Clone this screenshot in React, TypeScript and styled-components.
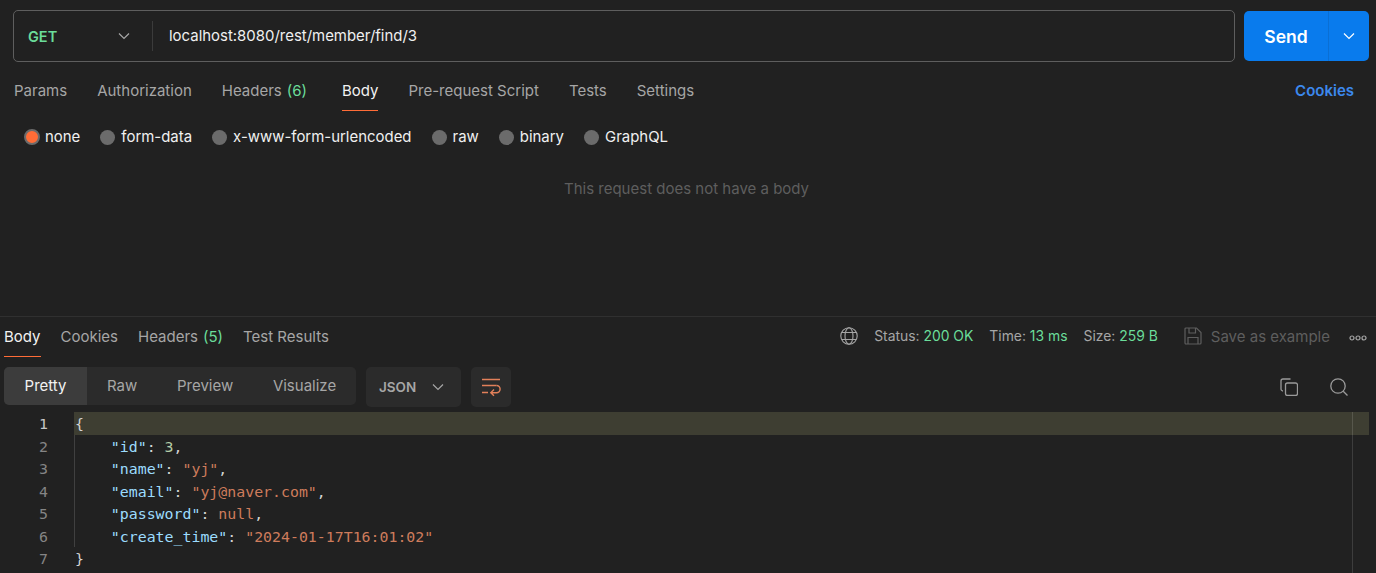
import React from "react";
import styled, { createGlobalStyle } from "styled-components";

const Global = createGlobalStyle`
  html, body { margin: 0; padding: 0; background: #212121; height: 100%; overflow: hidden; }
  body { font-family: Inter, "Noto Sans", sans-serif; color: #fff; }
`;

const Page = styled.div`
  width: 1376px;
  height: 573px;
  display: flex;
  flex-direction: column;
  overflow: hidden;
  background: #212121;
`;

const RequestPane = styled.section`
  height: 317px;
  box-sizing: border-box;
  padding: 10px 7px 0 13px;
  border-bottom: 1px solid #303030;
  display: flex;
  flex-direction: column;
`;

const UrlRow = styled.div`
  display: flex;
  gap: 9px;
  height: 52px;
`;

const UrlBox = styled.div`
  flex: 1;
  box-sizing: border-box;
  border: 1px solid #5e5e5e;
  border-radius: 5px;
  display: flex;
  align-items: center;
`;

const MethodSelect = styled.div`
  width: 139px;
  height: 30px;
  box-sizing: border-box;
  padding: 0 21px 0 14px;
  border-right: 1px solid #3b3b3b;
  display: flex;
  align-items: center;
  justify-content: space-between;
  color: #6bdd9a;
  font-size: 14.5px;
  font-weight: 600;
`;

const UrlText = styled.span`
  margin-left: 16px;
  margin-top: -1px;
  font-size: 14.95px;
  color: #f0f0f0;
`;

const SendGroup = styled.div`
  width: 125px;
  height: 50px;
  margin-top: 1px;
  background: #097bed;
  border-radius: 5px;
  display: flex;
`;

const SendLabel = styled.div`
  width: 85px;
  display: flex;
  align-items: center;
  justify-content: center;
  font-size: 17.5px;
  font-weight: 600;
  color: #fff;
  border-right: 1px solid #0a6fd4;
  box-sizing: border-box;
`;

const SendCaret = styled.div`
  flex: 1;
  display: flex;
  align-items: center;
  justify-content: center;
`;

const TabRow = styled.div`
  display: flex;
  gap: 30px;
  margin-top: 8px;
  padding-left: 1px;
  height: 41px;
  align-items: stretch;
`;

const Tab = styled.div<{ $active?: boolean; $extra?: number }>`
  display: flex;
  align-items: center;
  font-size: 15px;
  padding-right: ${(p) => p.$extra ?? 0}px;
  color: ${(p) => (p.$active ? "#f2f2f2" : "#a6a6a6")};
  ${(p) => (p.$active ? "box-shadow: inset 0 -1px 0 #ff6c37;" : "")}
`;

const ResponseTab = styled(Tab)`
  padding-bottom: 2px;
`;

const Count = styled.span`
  color: #6bdd9a;
  margin-left: 5px;
`;

const CookiesLink = styled.div`
  margin-left: auto;
  margin-right: 15px;
  display: flex;
  align-items: center;
  font-size: 15px;
  font-weight: 600;
  color: #3c89ee;
`;

const RadioRow = styled.div`
  display: flex;
  gap: 20px;
  margin: 8px 0 0 11px;
  height: 36px;
  align-items: center;
`;

const RadioItem = styled.label`
  display: flex;
  align-items: center;
  gap: 6px;
  font-size: 14.95px;
  color: #f0f0f0;
`;

const RadioDot = styled.span<{ $on?: boolean }>`
  width: ${(p) => (p.$on ? 16 : 15)}px;
  height: ${(p) => (p.$on ? 16 : 15)}px;
  margin-right: ${(p) => (p.$on ? -1 : 0)}px;
  border-radius: 50%;
  background: ${(p) => (p.$on ? "#ff6c37" : "#6b6b6b")};
  box-sizing: border-box;
  ${(p) => (p.$on ? "border: 2.5px solid #6b6b6b;" : "")}
`;

const EmptyNote = styled.div`
  margin-top: 24px;
  text-align: center;
  font-size: 15px;
  color: #5e5e5e;
  padding-right: 9px;
`;

const ResponsePane = styled.section`
  flex: 1;
  display: flex;
  flex-direction: column;
  min-height: 0;
`;

const ResponseHead = styled.div`
  display: flex;
  height: 40px;
  padding: 0 9px 0 4px;
  align-items: stretch;
`;

const ResponseTabs = styled.div`
  display: flex;
  gap: 20px;
`;

const Meta = styled.div`
  margin-left: auto;
  display: flex;
  align-items: center;
  padding-bottom: 2px;
  font-size: 13.9px;
  color: #a6a6a6;
`;

const MetaItem = styled.span`
  margin-left: 16px;
  white-space: nowrap;
`;

const MetaValue = styled.span`
  color: #6bdd9a;
`;

const SaveExample = styled.span`
  margin-left: 26px;
  margin-right: 19px;
  display: flex;
  align-items: center;
  gap: 9px;
  font-size: 15px;
  color: #5e5e5e;
`;

const DotsSlot = styled.span`
  display: flex;
  margin-top: 3px;
`;

const Toolbar = styled.div`
  display: flex;
  align-items: flex-start;
  height: 55px;
  padding: 10px 28px 0 4px;
  box-sizing: border-box;
`;

const Segment = styled.div`
  display: flex;
  height: 38px;
  width: 352px;
  background: #2b2b2b;
  border-radius: 5px;
  overflow: hidden;
`;

const SegmentItem = styled.div<{ $active?: boolean }>`
  padding: 0 20px 2px;
  min-width: ${(p) => (p.$active ? "83px" : "0")};
  box-sizing: border-box;
  display: flex;
  align-items: center;
  justify-content: center;
  font-size: 15px;
  color: ${(p) => (p.$active ? "#f2f2f2" : "#a6a6a6")};
  background: ${(p) => (p.$active ? "#3c3c3c" : "transparent")};
`;

const FormatSelect = styled.div`
  margin-left: 10px;
  width: 95px;
  height: 40px;
  box-sizing: border-box;
  background: #2b2b2b;
  border-radius: 5px;
  display: flex;
  align-items: center;
  justify-content: space-between;
  padding: 0 16px 0 13px;
  font-size: 13.5px;
  font-weight: 600;
  color: #a6a6a6;
`;

const WrapButton = styled.div`
  margin-left: 10px;
  width: 40px;
  height: 40px;
  background: #2b2b2b;
  border-radius: 5px;
  display: flex;
  align-items: center;
  justify-content: center;
`;

const ToolActions = styled.div`
  margin-left: auto;
  display: flex;
  align-items: center;
  gap: 32px;
  height: 40px;
`;

const Editor = styled.div`
  position: relative;
  flex: 1;
  font-family: "DejaVu Sans Mono", monospace;
  font-size: 14.88px;
  line-height: 22.5px;
  min-height: 0;
  padding-top: 1px;
`;

const HighlightBar = styled.div`
  position: absolute;
  left: 74px;
  right: 7px;
  top: 0;
  height: 23px;
  background: #3e3e32;
`;

const Ruler = styled.div`
  position: absolute;
  left: 1352px;
  top: 0;
  bottom: 0;
  width: 1px;
  background: rgba(255, 255, 255, 0.13);
`;

const Guide = styled.div`
  position: absolute;
  left: 74px;
  top: 23px;
  height: 112px;
  width: 1px;
  background: #404040;
`;

const Line = styled.div`
  position: relative;
  display: flex;
  height: 22.5px;
  white-space: pre;
`;

const Gutter = styled.span<{ $active?: boolean }>`
  width: 48px;
  text-align: right;
  margin-right: 27px;
  color: ${(p) => (p.$active ? "#c6c6c6" : "#858585")};
`;

const Code = styled.span`
  color: #d4d4d4;
`;

const Key = styled.span`
  color: #9cdcfe;
`;
const Str = styled.span`
  color: #ce7c5c;
`;
const Num = styled.span`
  color: #b5cea8;
`;

const Chevron = ({ color = "#a6a6a6", size = 14 }: { color?: string; size?: number }) => (
  <svg width={size} height={size} viewBox="0 0 14 14" fill="none" stroke={color} strokeWidth="1.2">
    <path d="M2 4.5 L7 9.5 L12 4.5" />
  </svg>
);

const Globe = () => (
  <svg width="18" height="18" viewBox="0 0 18 18" fill="none" stroke="#a6a6a6" strokeWidth="1.1">
    <circle cx="9" cy="9" r="8.2" />
    <ellipse cx="9" cy="9" rx="4" ry="8.2" />
    <path d="M1.8 5.5 H16.2 M1.8 12.5 H16.2" />
  </svg>
);

const SaveIcon = () => (
  <svg width="18" height="18" viewBox="0 0 18 18" fill="none" stroke="#5e5e5e" strokeWidth="1.2">
    <path d="M1 2 A1 1 0 0 1 2 1 H12.5 L17 5.5 V16 A1 1 0 0 1 16 17 H2 A1 1 0 0 1 1 16 Z" />
    <path d="M5 1 V6 H11.5 V1 M4 17 V10.5 H14 V17" />
  </svg>
);

const Dots = () => (
  <svg width="18" height="6" viewBox="0 0 18 6" fill="none" stroke="#a6a6a6" strokeWidth="1.2">
    <circle cx="3" cy="3" r="2" />
    <circle cx="9" cy="3" r="2" />
    <circle cx="15" cy="3" r="2" />
  </svg>
);

const WrapIcon = () => (
  <svg width="20" height="19" viewBox="0 0 20 19" fill="none" stroke="#e2805a" strokeWidth="1.4">
    <path d="M1 1.5 H19 M1 7.5 H15.5 M1 14.5 H7" />
    <path d="M15.5 7.5 A3.6 3.6 0 0 1 15.5 14.7 H10 M13 11.5 L9.8 14.7 L13 17.8" />
  </svg>
);

const CopyIcon = () => (
  <svg width="18" height="18" viewBox="0 0 18 18" fill="none" stroke="#9a9a9a" strokeWidth="1.3">
    <path d="M3 13 A2 2 0 0 1 1 11 V3 A2 2 0 0 1 3 1 H10.5" />
    <rect x="5.5" y="5" width="12" height="12.5" rx="2" />
  </svg>
);

const SearchIcon = () => (
  <svg width="18" height="18" viewBox="0 0 18 18" fill="none" stroke="#9a9a9a" strokeWidth="1.3">
    <circle cx="8" cy="8" r="7.2" />
    <path d="M13.2 13.2 L17.5 17.5" />
  </svg>
);

const requestTabs = ["Params", "Authorization", "Headers", "Body", "Pre-request Script", "Tests", "Settings"];
const bodyModes = ["none", "form-data", "x-www-form-urlencoded", "raw", "binary", "GraphQL"];
const views = ["Pretty", "Raw", "Preview", "Visualize"];

const App = () => (
  <Page>
    <Global />
    <RequestPane>
      <UrlRow>
        <UrlBox>
          <MethodSelect>
            GET
            <Chevron />
          </MethodSelect>
          <UrlText>localhost:8080/rest/member/find/3</UrlText>
        </UrlBox>
        <SendGroup>
          <SendLabel>Send</SendLabel>
          <SendCaret>
            <Chevron color="#fff" />
          </SendCaret>
        </SendGroup>
      </UrlRow>
      <TabRow>
        {requestTabs.map((t) => (
          <Tab key={t} $active={t === "Body"} $extra={t === "Headers" ? 5 : 0}>
            {t}
            {t === "Headers" && <Count>(6)</Count>}
          </Tab>
        ))}
        <CookiesLink>Cookies</CookiesLink>
      </TabRow>
      <RadioRow>
        {bodyModes.map((m, i) => (
          <RadioItem key={m}>
            <RadioDot $on={i === 0} />
            {m}
          </RadioItem>
        ))}
      </RadioRow>
      <EmptyNote>This request does not have a body</EmptyNote>
    </RequestPane>
    <ResponsePane>
      <ResponseHead>
        <ResponseTabs>
          <ResponseTab $active>Body</ResponseTab>
          <ResponseTab>Cookies</ResponseTab>
          <ResponseTab>
            Headers<Count>(5)</Count>
          </ResponseTab>
          <ResponseTab>Test Results</ResponseTab>
        </ResponseTabs>
        <Meta>
          <Globe />
          <MetaItem>
            Status: <MetaValue>200 OK</MetaValue>
          </MetaItem>
          <MetaItem>
            Time: <MetaValue>13 ms</MetaValue>
          </MetaItem>
          <MetaItem>
            Size: <MetaValue>259 B</MetaValue>
          </MetaItem>
          <SaveExample>
            <SaveIcon />
            Save as example
          </SaveExample>
          <DotsSlot>
            <Dots />
          </DotsSlot>
        </Meta>
      </ResponseHead>
      <Toolbar>
        <Segment>
          {views.map((v, i) => (
            <SegmentItem key={v} $active={i === 0}>
              {v}
            </SegmentItem>
          ))}
        </Segment>
        <FormatSelect>
          JSON
          <Chevron />
        </FormatSelect>
        <WrapButton>
          <WrapIcon />
        </WrapButton>
        <ToolActions>
          <CopyIcon />
          <SearchIcon />
        </ToolActions>
      </Toolbar>
      <Editor>
        <HighlightBar />
        <Ruler />
        <Guide />
        <Line>
          <Gutter $active>1</Gutter>
          <Code>{"{"}</Code>
        </Line>
        <Line>
          <Gutter>2</Gutter>
          <Code>
            {"    "}
            <Key>"id"</Key>: <Num>3</Num>,
          </Code>
        </Line>
        <Line>
          <Gutter>3</Gutter>
          <Code>
            {"    "}
            <Key>"name"</Key>: <Str>"yj"</Str>,
          </Code>
        </Line>
        <Line>
          <Gutter>4</Gutter>
          <Code>
            {"    "}
            <Key>"email"</Key>: <Str>"yj@naver.com"</Str>,
          </Code>
        </Line>
        <Line>
          <Gutter>5</Gutter>
          <Code>
            {"    "}
            <Key>"password"</Key>: <Str>null</Str>,
          </Code>
        </Line>
        <Line>
          <Gutter>6</Gutter>
          <Code>
            {"    "}
            <Key>"create_time"</Key>: <Str>"2024-01-17T16:01:02"</Str>
          </Code>
        </Line>
        <Line>
          <Gutter>7</Gutter>
          <Code>{"}"}</Code>
        </Line>
      </Editor>
    </ResponsePane>
  </Page>
);

export default App;
